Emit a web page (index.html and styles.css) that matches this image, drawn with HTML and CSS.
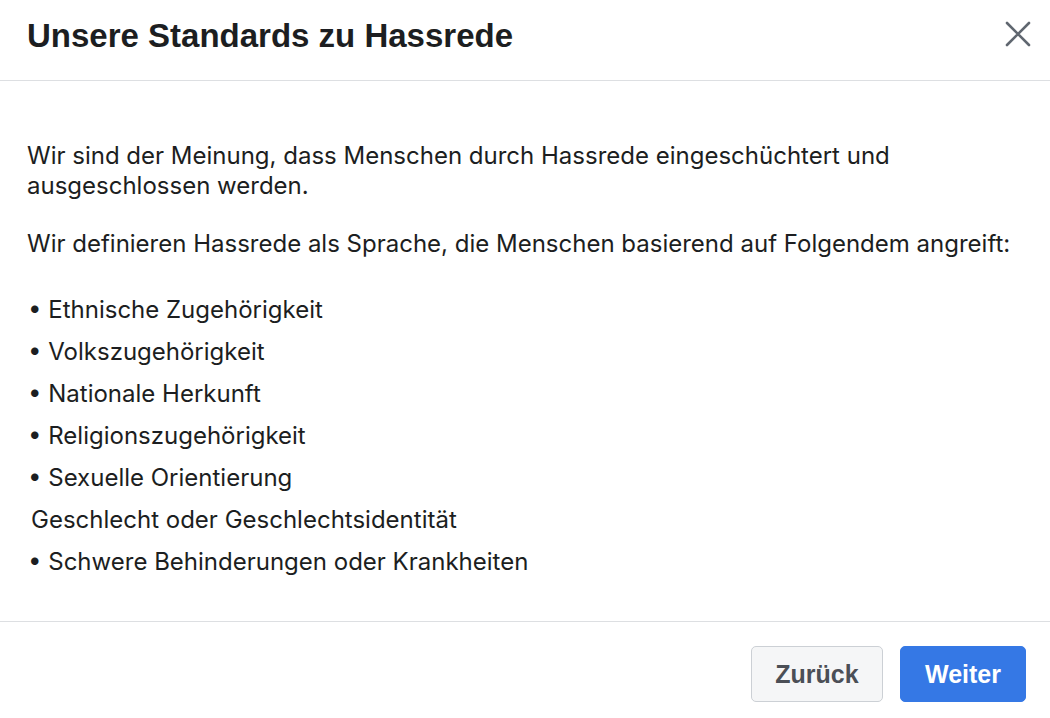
FILE: index.html
```html
<!DOCTYPE html>
<html lang="de">
<head>
<meta charset="utf-8">
<link rel="stylesheet" href="styles.css">
</head>
<body>
<div class="dialog">
  <header class="head">
    <h1 class="title">Unsere Standards zu Hassrede</h1>
    <button class="close" aria-label="Schließen">
      <svg width="26" height="26" viewBox="0 0 26 26"><path d="M2 2 L24 24 M24 2 L2 24" stroke="#606770" stroke-width="2.6" stroke-linecap="round" fill="none"/></svg>
    </button>
  </header>
  <main class="content">
    <p class="para">Wir sind der Meinung, dass Menschen durch Hassrede eingeschüchtert und ausgeschlossen werden.</p>
    <p class="para last">Wir definieren Hassrede als Sprache, die Menschen basierend auf Folgendem angreift:</p>
    <ul class="list">
      <li>• Ethnische Zugehörigkeit</li>
      <li>• Volkszugehörigkeit</li>
      <li>• Nationale Herkunft</li>
      <li>• Religionszugehörigkeit</li>
      <li>• Sexuelle Orientierung</li>
      <li class="plain">Geschlecht oder Geschlechtsidentität</li>
      <li>• Schwere Behinderungen oder Krankheiten</li>
    </ul>
  </main>
  <footer class="foot">
    <button class="btn btn-back">Zurück</button>
    <button class="btn btn-next">Weiter</button>
  </footer>
</div>
</body>
</html>
```
FILE: styles.css
```css
* { box-sizing: border-box; }
html, body { margin: 0; padding: 0; background: #fff; }
body { font-family: Inter, "Liberation Sans", sans-serif; color: #1c1e21; }
.dialog { width: 1050px; height: 718px; display: flex; flex-direction: column; }
.head { height: 81px; border-bottom: 1px solid #dddfe2; display: flex; align-items: center; justify-content: space-between; padding: 0 19px 8px 27px; }
.title { margin: 0; font-family: "Liberation Sans", sans-serif; font-weight: bold; font-size: 33px; letter-spacing: 0; color: #1c1e21; }
.close { border: 0; background: none; padding: 0; width: 26px; height: 26px; display: flex; margin-bottom: 4px; }
.content { padding: 60px 27px 38px; border-bottom: 1px solid #dddfe2; }
.para { margin: 0 0 28px; font-size: 24px; line-height: 30px; }
.para.last { margin-bottom: 30px; }
.list { list-style: none; margin: 0; padding: 0; font-size: 24px; line-height: 42px; }
.list li { white-space: nowrap; padding-left: 1px; }
.list li.plain { padding-left: 4px; }
.foot { display: flex; justify-content: flex-end; gap: 17px; padding: 24px 24px 0; }
.btn { height: 56px; border-radius: 5px; font-family: "Liberation Sans", sans-serif; font-weight: bold; font-size: 25px; padding: 0; border: 1px solid transparent; }
.btn-back { background: #f5f6f7; border-color: #ccd0d5; color: #4b4f56; width: 132px; }
.btn-next { background: #3578e5; border-color: #3578e5; color: #fff; width: 126px; }
```
